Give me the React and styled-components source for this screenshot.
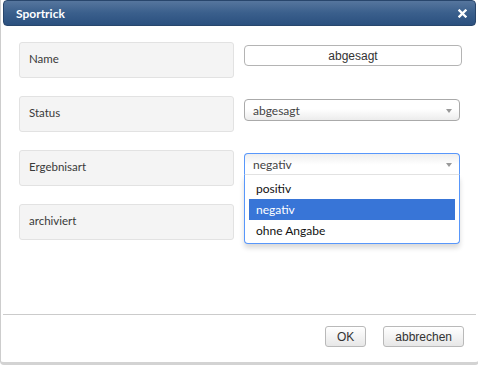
import React from 'react';
import styled, { createGlobalStyle } from 'styled-components';

const GlobalStyle = createGlobalStyle`
  html, body {
    margin: 0;
    padding: 0;
    background: #fff;
    overflow: hidden;
  }
  * {
    box-sizing: border-box;
  }
`;

const options = ['positiv', 'negativ', 'ohne Angabe'];

const App = () => {
  return (
    <>
      <GlobalStyle />
      <StDialog>
        <StTitleBar>
          <StTitle>Sportrick</StTitle>
          <StClose aria-label='schließen'>
            <svg width='9' height='9' viewBox='0 0 9 9'>
              <path d='M1.5 1.5 L7.5 7.5 M7.5 1.5 L1.5 7.5' stroke='#fff' strokeWidth='2.3' strokeLinecap='square' />
            </svg>
          </StClose>
        </StTitleBar>

        <StContent>
          <StRow>
            <StLabel>Name</StLabel>
            <StControl>
              <StTextInput defaultValue='abgesagt' />
            </StControl>
          </StRow>

          <StRow>
            <StLabel>Status</StLabel>
            <StControl>
              <StSelect>
                <span>abgesagt</span>
                <StArrow />
              </StSelect>
            </StControl>
          </StRow>

          <StRow>
            <StLabel>Ergebnisart</StLabel>
            <StControl>
              <StSelect $open>
                <span>negativ</span>
                <StArrow />
              </StSelect>
              <StDrop>
                {options.map((o) => (
                  <StOption key={o} $active={o === 'negativ'}>
                    {o}
                  </StOption>
                ))}
              </StDrop>
            </StControl>
          </StRow>

          <StRow>
            <StLabel>archiviert</StLabel>
            <StControl />
          </StRow>
        </StContent>

        <StFooter>
          <StButton>OK</StButton>
          <StButton>abbrechen</StButton>
        </StFooter>
      </StDialog>
    </>
  );
};

export default App;

const StDialog = styled.div`
  width: 479px;
  height: 365px;
  padding: 0 2px;
  background: #fff;
  border-left: 1px solid #cdcdcd;
  border-right: 1px solid #cdcdcd;
  border-bottom: 3px solid #d3d3d3;
  border-radius: 0 0 4px 4px;
  display: flex;
  flex-direction: column;
`;

const StTitleBar = styled.div`
  height: 26px;
  display: flex;
  align-items: center;
  justify-content: space-between;
  padding: 0 8px 0 12px;
  border: 1px solid #28466c;
  border-radius: 4px;
  background: linear-gradient(to bottom, #56769e 0%, #3a5f8c 50%, #2b507f 100%);
`;

const StTitle = styled.span`
  font-family: Lato, 'Open Sans', sans-serif;
  font-weight: 700;
  font-size: 12px;
  color: #fff;
`;

const StClose = styled.span`
  display: flex;
  width: 9px;
  height: 9px;
`;

const StContent = styled.div`
  height: 288px;
  padding: 16px 16px 0 16px;
  display: flex;
  flex-direction: column;
  gap: 18px;
`;

const StRow = styled.div`
  display: grid;
  grid-template-columns: 215px 218px;
  column-gap: 10px;
  height: 36px;
`;

const StLabel = styled.div`
  height: 36px;
  padding: 8px 9px;
  background: #f4f4f4;
  border: 1px solid #e2e2e2;
  border-radius: 3px;
  font-family: Lato, 'Open Sans', sans-serif;
  font-size: 11.5px;
  line-height: 16px;
  color: #3a3a3a;
`;

const StControl = styled.div`
  position: relative;
  padding-top: 3px;
`;

const StTextInput = styled.input`
  display: block;
  width: 218px;
  height: 21px;
  padding: 0 6px;
  border: 1px solid #b4b4b4;
  border-radius: 4px;
  background: #fff;
  text-align: center;
  font-family: 'Liberation Sans', Arial, sans-serif;
  font-size: 12px;
  color: #333;
  outline: none;
`;

const StSelect = styled.div`
  width: 216px;
  height: 22px;
  display: flex;
  align-items: center;
  justify-content: space-between;
  padding: 0 7px 0 8px;
  border: 1px solid ${(p) => (p.$open ? '#5897fb' : '#aaa')};
  border-bottom-color: ${(p) => (p.$open ? '#e3e3e3' : '#aaa')};
  border-radius: ${(p) => (p.$open ? '4px 4px 0 0' : '4px')};
  background: ${(p) =>
    p.$open
      ? 'linear-gradient(to bottom, #eee 0%, #fff 55%)'
      : 'linear-gradient(to bottom, #fff 45%, #ececec 100%)'};
  font-family: Lato, 'Open Sans', sans-serif;
  font-size: 12px;
  color: #444;
`;

const StArrow = styled.span`
  width: 0;
  height: 0;
  margin-top: 2px;
  border-left: 3px solid transparent;
  border-right: 3px solid transparent;
  border-top: 4px solid #999;
`;

const StDrop = styled.div`
  position: absolute;
  top: 25px;
  left: 0;
  width: 216px;
  padding: 3px 4px 2px 4px;
  background: #fff;
  border: 1px solid #5897fb;
  border-top: 0;
  border-radius: 0 0 4px 4px;
  box-shadow: 0 4px 5px rgba(0, 0, 0, 0.15);
  z-index: 10;
`;

const StOption = styled.div`
  height: 21px;
  padding: 0 7px;
  line-height: 21px;
  font-family: Lato, 'Open Sans', sans-serif;
  font-size: 12px;
  color: ${(p) => (p.$active ? '#fff' : '#111')};
  background: ${(p) => (p.$active ? '#3875d7' : 'transparent')};
`;

const StFooter = styled.div`
  flex: 1;
  display: flex;
  justify-content: flex-end;
  align-items: flex-start;
  gap: 17px;
  padding: 11px 12px 0 0;
  border-top: 1px solid #cbcbcb;
`;

const StButton = styled.button`
  height: 21px;
  padding: 0 11px;
  border: 1px solid #b9b9b9;
  border-radius: 3px;
  background: linear-gradient(to bottom, #fff 0%, #e7e7e7 100%);
  font-family: 'Liberation Sans', Arial, sans-serif;
  font-size: 12px;
  color: #333;
`;
